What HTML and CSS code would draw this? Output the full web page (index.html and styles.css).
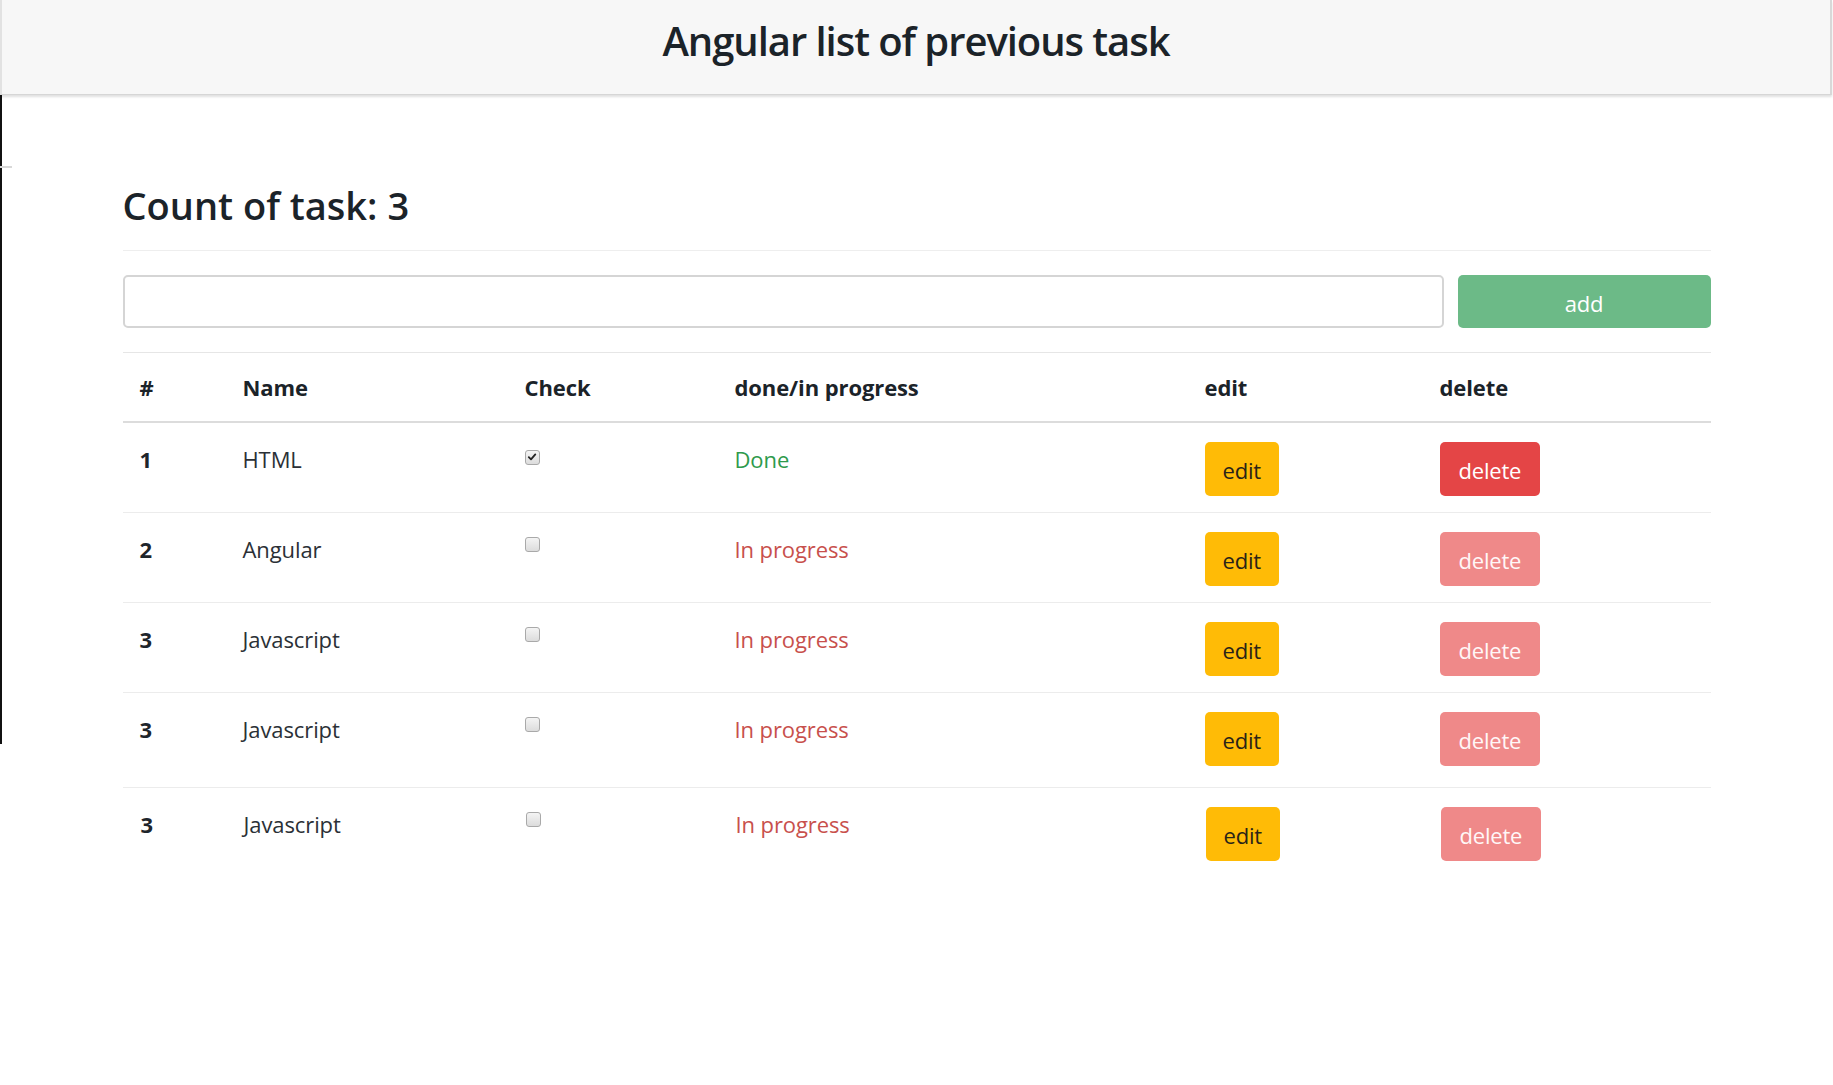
FILE: index.html
```html
<!DOCTYPE html>
<html lang="en">
<head>
<meta charset="utf-8">
<title>Angular list of previous task</title>
<link rel="stylesheet" href="styles.css">
</head>
<body>
<header class="topbar">
  <h1 class="topbar-title">Angular list of previous task</h1>
</header>
<div class="edge-line"></div>
<div class="edge-tick"></div>
<main class="container">
  <h2 class="count">Count of task: 3</h2>
  <hr class="divider">
  <form class="add-form">
    <input class="task-input" type="text" aria-label="task">
    <button class="btn btn-add" type="button">add</button>
  </form>
  <div class="table">
    <div class="row head">
      <div class="cell">#</div>
      <div class="cell">Name</div>
      <div class="cell">Check</div>
      <div class="cell">done/in progress</div>
      <div class="cell">edit</div>
      <div class="cell">delete</div>
    </div>
    <div class="row">
      <div class="cell num">1</div>
      <div class="cell">HTML</div>
      <div class="cell"><span class="check checked"><svg viewBox="0 0 10 10" width="10" height="10"><path d="M1.8 5.2 L4 7.4 L8.3 2.4" fill="none" stroke="#222" stroke-width="1.8" stroke-linecap="round" stroke-linejoin="round"/></svg></span></div>
      <div class="cell status done">Done</div>
      <div class="cell btn-cell"><button class="btn btn-edit" type="button">edit</button></div>
      <div class="cell btn-cell"><button class="btn btn-delete" type="button">delete</button></div>
    </div>
    <div class="row">
      <div class="cell num">2</div>
      <div class="cell">Angular</div>
      <div class="cell"><span class="check"></span></div>
      <div class="cell status progress">In progress</div>
      <div class="cell btn-cell"><button class="btn btn-edit" type="button">edit</button></div>
      <div class="cell btn-cell"><button class="btn btn-delete faded" type="button">delete</button></div>
    </div>
    <div class="row">
      <div class="cell num">3</div>
      <div class="cell">Javascript</div>
      <div class="cell"><span class="check"></span></div>
      <div class="cell status progress">In progress</div>
      <div class="cell btn-cell"><button class="btn btn-edit" type="button">edit</button></div>
      <div class="cell btn-cell"><button class="btn btn-delete faded" type="button">delete</button></div>
    </div>
    <div class="row tall">
      <div class="cell num">3</div>
      <div class="cell">Javascript</div>
      <div class="cell"><span class="check"></span></div>
      <div class="cell status progress">In progress</div>
      <div class="cell btn-cell"><button class="btn btn-edit" type="button">edit</button></div>
      <div class="cell btn-cell"><button class="btn btn-delete faded" type="button">delete</button></div>
    </div>
    <div class="row last">
      <div class="cell num">3</div>
      <div class="cell">Javascript</div>
      <div class="cell"><span class="check"></span></div>
      <div class="cell status progress">In progress</div>
      <div class="cell btn-cell"><button class="btn btn-edit" type="button">edit</button></div>
      <div class="cell btn-cell"><button class="btn btn-delete faded" type="button">delete</button></div>
    </div>
  </div>
</main>
</body>
</html>
```
FILE: styles.css
```css
* { box-sizing: border-box; }

html, body {
  margin: 0;
  padding: 0;
  background: #ffffff;
}

body {
  font-family: "Open Sans", "Noto Sans", "Liberation Sans", sans-serif;
  color: #212529;
  position: relative;
  min-height: 1085px;
}

.topbar {
  height: 95px;
  background: #f7f7f7;
  border-left: 2px solid #e2e2e2;
  border-right: 2px solid #d8d8d8;
  border-bottom: 1px solid #d6d6d6;
  box-shadow: 0 2px 2px rgba(0, 0, 0, 0.12);
  margin-right: 1px;
  display: flex;
  justify-content: center;
}

.topbar-title {
  margin: 0;
  padding-top: 14px;
  font-size: 40px;
  font-weight: 600;
  line-height: 54px;
  color: #1b2329;
  letter-spacing: -1.05px;
}

.edge-line {
  position: absolute;
  left: 0;
  top: 95px;
  width: 2px;
  height: 649px;
  background: #111;
}

.edge-tick {
  position: absolute;
  left: 0;
  top: 166px;
  width: 12px;
  height: 2px;
  background: #d8d8d8;
}

.container {
  width: 1588px;
  margin: 0 auto;
}

.count {
  margin: 0;
  padding-top: 85px;
  font-size: 38px;
  font-weight: 600;
  line-height: 50px;
  color: #1b2329;
  letter-spacing: 0;
}

.divider {
  margin: 20px 0 0;
  border: 0;
  border-top: 1px solid #eeeeee;
  height: 0;
}

.add-form {
  display: flex;
  gap: 14px;
  margin-top: 24px;
}

.task-input {
  flex: 1;
  height: 53px;
  border: 2px solid #d5d5d5;
  border-radius: 5px;
  background: #fff;
  font: inherit;
  font-size: 20px;
  padding: 0 14px;
}

.btn {
  font-family: inherit;
  font-size: 22px;
  border: 0;
  border-radius: 5px;
  cursor: pointer;
  letter-spacing: -0.2px;
}

.btn-add {
  width: 253px;
  height: 53px;
  background: #6cba87;
  color: #ffffff;
  padding: 2px 0 0;
}

.table {
  margin-top: 24px;
  border-top: 1px solid #e6e6e6;
}

.row {
  display: grid;
  grid-template-columns: 103px 282px 210px 470px 235px 288px;
  border-bottom: 1px solid #ececec;
  font-size: 22px;
  line-height: 30px;
}

.row.head {
  font-weight: 700;
  border-bottom: 2px solid #dcdcdc;
  color: #1e252b;
  letter-spacing: -0.3px;
}

.row.head .cell {
  padding-top: 19px;
  padding-bottom: 19px;
  color: #1b2329;
}

.row.last {
  border-bottom-color: transparent;
}

.cell {
  padding: 21px 17px 16px;
  color: #2b3036;
  letter-spacing: -0.1px;
}

.cell.num {
  font-weight: 700;
  color: #1e252b;
}

.cell.btn-cell {
  padding-top: 19px;
  padding-bottom: 16px;
}

.row.tall .cell.btn-cell {
  padding-bottom: 21px;
}

.row.last .cell {
  padding-left: 18px;
}

.status.done { color: #2e9a4c; }
.status.progress { color: #c8504c; }

.check {
  display: inline-flex;
  align-items: center;
  justify-content: center;
  width: 15px;
  height: 15px;
  vertical-align: -1px;
  border: 1px solid #a9a9a9;
  border-radius: 3px;
  background: linear-gradient(#f4f4f4, #dcdcdc);
  transform: translateY(-7px);
}

.btn-edit {
  height: 54px;
  padding: 2px 18px 0;
  background: #ffbb06;
  color: #2a2418;
}

.btn-delete {
  height: 54px;
  padding: 2px 19px 0;
  background: #e44546;
  color: #ffffff;
}

.btn-delete.faded {
  background: #ef8989;
  color: #fff7f7;
}
```
